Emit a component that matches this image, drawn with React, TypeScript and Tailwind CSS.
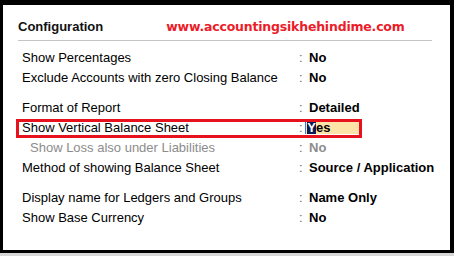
const rows: {
  label: string;
  value: string;
  dim?: boolean;
  gapBefore?: boolean;
  active?: boolean;
}[] = [
  { label: "Show Percentages", value: "No" },
  { label: "Exclude Accounts with zero Closing Balance", value: "No" },
  { label: "Format of Report", value: "Detailed", gapBefore: true },
  { label: "Show Vertical Balance Sheet", value: "Yes", active: true },
  { label: "Show Loss also under Liabilities", value: "No", dim: true },
  { label: "Method of showing Balance Sheet", value: "Source / Application" },
  { label: "Display name for Ledgers and Groups", value: "Name Only", gapBefore: true },
  { label: "Show Base Currency", value: "No" },
];

export default function App() {
  return (
    <div className="w-[454px] h-[256px] bg-[#d6d6d6] overflow-hidden font-['Liberation_Sans',Arial,sans-serif]">
      <div className="h-[253px] bg-white border-black border-l-[3px] border-t-[5px] border-r-[4px] border-b-[3px] flex flex-col">
        <div className="mt-[12px] h-[20px] flex items-center pl-[15px]">
          <span className="text-[13px] font-bold text-[#111]">Configuration</span>
          <span className="ml-[63px] text-[12.5px] font-bold text-[#ec1c2a] font-['DejaVu_Sans',Verdana,sans-serif] tracking-[-0.2px]">
            www.accountingsikhehindime.com
          </span>
        </div>
        <div className="mt-[3px] ml-[15px] w-[414px] h-px bg-[#c4c4c4]" />
        <div className="mt-[7px] flex flex-col">
          {rows.map((r) => (
            <div
              key={r.label}
              className={`relative h-[20px] flex items-center text-[13px] ${r.gapBefore ? "mt-[10px]" : ""}`}
            >
              <span
                className={`w-[296px] shrink-0 ${r.dim ? "pl-[27px] text-[#8c8c8c]" : "pl-[19px] text-black"}`}
              >
                {r.label}
              </span>
              <span className="w-[10px] text-[#6b6b6b]">:</span>
              {r.active ? (
                <span className="relative flex items-center h-[12px] w-[54px] bg-[#fde3a7] ml-[-3px] pl-[1px]">
                  <span className="absolute left-[-1px] top-0 h-[12px] w-px bg-[#3b78d8]" />
                  <span className="h-[12px] w-[9px] bg-[#0b1a55] text-white font-bold leading-[12px] flex justify-center">
                    Y
                  </span>
                  <span className="font-bold text-black leading-[12px]">es</span>
                </span>
              ) : (
                <span className={`font-bold ${r.dim ? "text-[#8c8c8c]" : "text-black"}`}>
                  {r.value}
                </span>
              )}
              {r.active && (
                <div className="absolute left-[13px] top-[1px] w-[346px] h-[19px] border-[3px] border-[#e8121f] pointer-events-none" />
              )}
            </div>
          ))}
        </div>
      </div>
    </div>
  );
}
